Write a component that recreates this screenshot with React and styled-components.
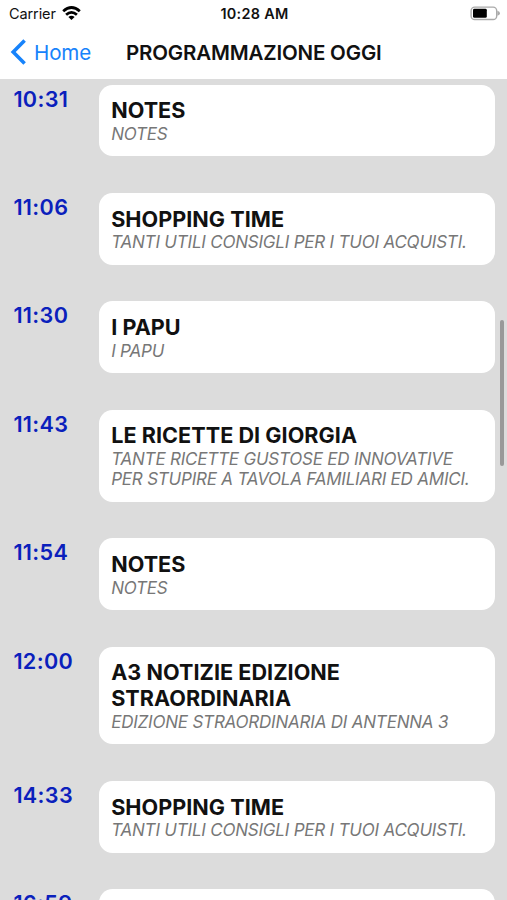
import React, { Component } from 'react'
import styled, { createGlobalStyle } from 'styled-components'

const colors = {
  black: '#111',
  white: '#fff',
  background: '#dcdcdc',
  link: '#1783fb',
  time: '#0a20bc',
  description: '#777'
}

const GlobalStyle = createGlobalStyle`
  * {
    box-sizing: border-box;
  }

  body {
    margin: 0;
    overflow: hidden;
    font-family: Inter, 'Liberation Sans', sans-serif;
  }
`

const Screen = styled.div`
  position: relative;
  display: flex;
  flex-direction: column;
  height: 900px;
  overflow: hidden;
  background: ${colors.background};
`

const StatusBar = styled.div`
  display: grid;
  grid-template-columns: 1fr auto 1fr;
  align-items: center;
  flex: none;
  height: 27px;
  padding: 0 7px 0 9px;
  background: ${colors.white};
  color: ${colors.black};
`

const Carrier = styled.div`
  display: flex;
  align-items: center;
  gap: 6px;
  font-size: 14.5px;
  letter-spacing: -0.1px;
  line-height: 27px;

  svg {
    margin-top: -2px;
  }
`

const Clock = styled.div`
  font-size: 14.4px;
  font-weight: 600;
  letter-spacing: 0.3px;
  line-height: 27px;
`

const Battery = styled.svg`
  justify-self: end;
`

const NavBar = styled.div`
  display: flex;
  align-items: center;
  flex: none;
  height: 52px;
  padding: 0 10px;
  background: ${colors.white};
`

const BackButton = styled.div`
  display: flex;
  align-items: center;
  width: 116px;
  gap: 7px;
  color: ${colors.link};
  font-size: 20.6px;
  letter-spacing: -0.15px;
  line-height: 52px;

  svg {
    margin-top: -2px;
  }
`

const NavTitle = styled.div`
  color: ${colors.black};
  font-size: 20.5px;
  font-weight: 600;
  letter-spacing: -0.17px;
  line-height: 52px;
  white-space: nowrap;
`

const Schedule = styled.div`
  display: flex;
  flex-direction: column;
  flex: 1;
  min-height: 0;
  gap: 36.6px;
  padding: 5.8px 12.5px 0 13.4px;
  overflow: hidden;
`

const ScheduleRow = styled.div`
  display: flex;
  align-items: flex-start;
  flex: none;
`

const Time = styled.div`
  width: 85.4px;
  color: ${colors.time};
  font-size: 21.6px;
  font-weight: 600;
  letter-spacing: 0.35px;
  line-height: 28.4px;
`

const Card = styled.div`
  flex: 1;
  min-height: 71.7px;
  padding: 12.6px 12.4px;
  border-radius: 13.5px;
  background: ${colors.white};

  h4 {
    margin: 0;
    color: ${colors.black};
    font-size: 21.6px;
    font-weight: 700;
    letter-spacing: 0.04px;
    line-height: 26.1px;
    white-space: pre-line;
  }

  p {
    margin: 0.6px 0 -0.6px;
    color: ${colors.description};
    font-size: 17px;
    font-style: italic;
    letter-spacing: -0.21px;
    line-height: 20.4px;
    white-space: pre-line;
  }
`

const ScrollIndicator = styled.div`
  position: absolute;
  top: 320px;
  right: 3.5px;
  width: 4px;
  height: 146px;
  border-radius: 2px;
  background: #999;
`

const programs = [
  { time: '10:31', title: 'NOTES', description: 'NOTES' },
  { time: '11:06', title: 'SHOPPING TIME', description: 'TANTI UTILI CONSIGLI PER I TUOI ACQUISTI.' },
  { time: '11:30', title: 'I PAPU', description: 'I PAPU' },
  {
    time: '11:43',
    title: 'LE RICETTE DI GIORGIA',
    description: 'TANTE RICETTE GUSTOSE ED INNOVATIVE\nPER STUPIRE A TAVOLA FAMILIARI ED AMICI.'
  },
  { time: '11:54', title: 'NOTES', description: 'NOTES' },
  {
    time: '12:00',
    title: 'A3 NOTIZIE EDIZIONE\nSTRAORDINARIA',
    description: 'EDIZIONE STRAORDINARIA DI ANTENNA 3'
  },
  { time: '14:33', title: 'SHOPPING TIME', description: 'TANTI UTILI CONSIGLI PER I TUOI ACQUISTI.' },
  { time: '16:59' }
]

class ProgramItem extends Component {
  render () {
    return (
      <ScheduleRow>
        <Time>{this.props.time}</Time>
        <Card>
          {this.props.title && <h4>{this.props.title}</h4>}
          {this.props.description && <p>{this.props.description}</p>}
        </Card>
      </ScheduleRow>
    )
  }
}

export default class App extends Component {
  render () {
    return (
      <Screen>
        <GlobalStyle />
        <StatusBar>
          <Carrier>
            Carrier
            <svg width="19" height="14" viewBox="0 0 19 14" fill="none" stroke="#000" strokeWidth="2.8">
              <path d="M1.2 5.2Q9.5 -2.2 17.8 5.2" />
              <path d="M4.1 8.7Q9.5 4 14.9 8.7" />
              <path d="M6.4 11Q9.5 8.6 12.6 11L9.5 14Z" fill="#000" stroke="none" />
            </svg>
          </Carrier>
          <Clock>10:28 AM</Clock>
          <Battery width="30" height="15" viewBox="0 0 30 15">
            <rect x="1.1" y="1.1" width="25.6" height="12.4" rx="3.6" fill="#fff" stroke="#aaa" strokeWidth="1.4" />
            <rect x="3" y="2.8" width="13.8" height="9" rx="1.4" fill="#000" />
            <path d="M27.4 4.8Q30 5.6 30 7.3T27.4 9.8Z" fill="#aaa" />
          </Battery>
        </StatusBar>
        <NavBar>
          <BackButton>
            <svg width="17" height="26" viewBox="0 0 17 26" fill="none" stroke="currentColor" strokeWidth="3.6">
              <path d="M14.6 1.6L3.2 13L14.6 24.4" />
            </svg>
            Home
          </BackButton>
          <NavTitle>PROGRAMMAZIONE OGGI</NavTitle>
        </NavBar>
        <Schedule>
          {programs.map(program => (
            <ProgramItem key={program.time} {...program} />
          ))}
        </Schedule>
        <ScrollIndicator />
      </Screen>
    )
  }
}
